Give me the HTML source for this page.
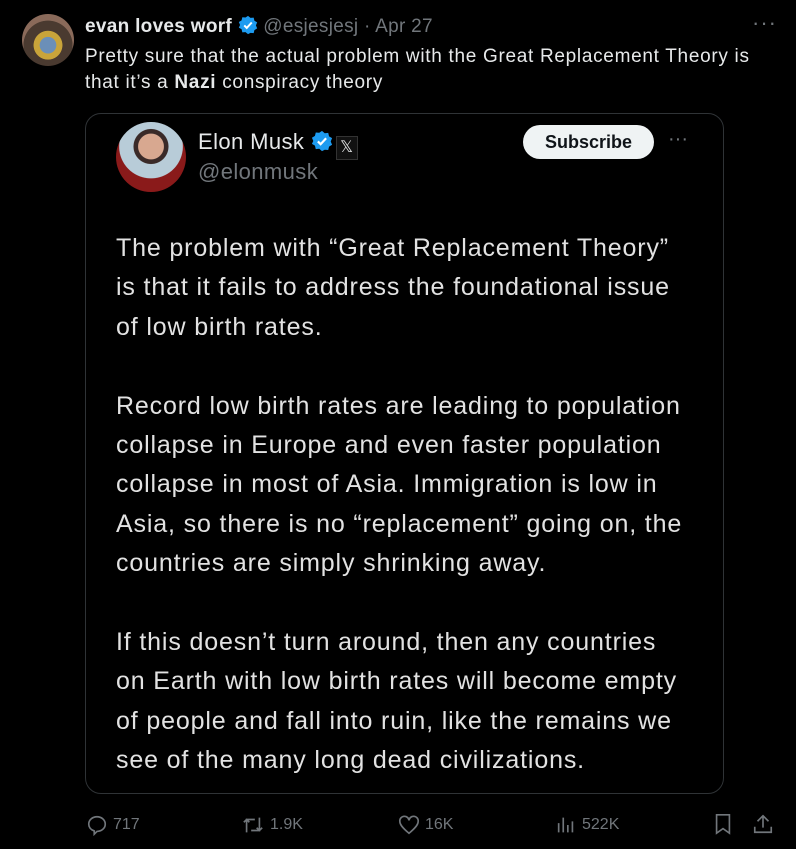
<!DOCTYPE html><html><head><style>
body{margin:0;background:#000;width:796px;height:849px;overflow:hidden;font-family:"Liberation Sans",sans-serif;color:#e7e9ea;position:relative}
.a{position:absolute}
.av{left:22px;top:14px;width:52px;height:52px;border-radius:50%;background:radial-gradient(circle at 50% 60%,#6b8fb8 0 20%,#c9a43a 21% 35%,#4a3a30 36% 60%,#8a6a5a 61%)}
.g{color:#71767b}
.card{left:85px;top:113px;width:637px;height:679px;border:1px solid #2f3336;border-radius:16px}
.body{left:116px;top:229px;font-size:25px;line-height:39.4px;color:#e2e2e2;width:620px;letter-spacing:0.85px;white-space:nowrap}
.ft{top:814px;font-size:16px;color:#71767b;display:flex;align-items:center;gap:5px}
svg{fill:none;stroke:#71767b;stroke-width:1.8}
</style></head><body>
<div class="a av"></div>
<div class="a" style="left:85px;top:14px;font-size:19px;line-height:26px;white-space:nowrap;letter-spacing:0.3px"><b>evan loves worf</b> <svg width="20" height="20" viewBox="0 0 24 24" style="vertical-align:-3px;stroke:none"><path fill="#1d9bf0" d="M12 1l3 2.5 3.8-.3.9 3.7 3.3 2-1.5 3.6 1.5 3.6-3.3 2-.9 3.7-3.8-.3L12 23l-3-2.5-3.8.3-.9-3.7-3.3-2L2.5 12 1 8.4l3.3-2 .9-3.7 3.8.3z"/><path d="M7.5 12.5l3 3 6-6.5" stroke="#fff" stroke-width="2.4" fill="none"/></svg> <span class="g">@esjesjesj · Apr 27</span></div>
<div class="a g" style="left:752px;top:10px;font-size:22px;letter-spacing:1px">···</div>
<div class="a" style="left:85px;top:44px;font-size:19px;line-height:26px;letter-spacing:0.7px;white-space:nowrap">Pretty sure that the actual problem with the Great Replacement Theory is<br>that it’s a <b>Nazi</b> conspiracy theory</div>
<div class="a card"></div>
<div class="a" style="left:116px;top:122px;width:70px;height:70px;border-radius:50%;background:radial-gradient(circle at 50% 35%,#d8a890 0 22%,#3a2a28 23% 30%,#b8ccd8 31% 55%,#8a1a1a 56%)"></div>
<div class="a" style="left:198px;top:129px;font-size:22px;white-space:nowrap;letter-spacing:0.4px">Elon Musk <svg width="22" height="22" viewBox="0 0 24 24" style="vertical-align:-3px;stroke:none"><path fill="#1d9bf0" d="M12 1l3 2.5 3.8-.3.9 3.7 3.3 2-1.5 3.6 1.5 3.6-3.3 2-.9 3.7-3.8-.3L12 23l-3-2.5-3.8.3-.9-3.7-3.3-2L2.5 12 1 8.4l3.3-2 .9-3.7 3.8.3z"/><path d="M7.5 12.5l3 3 6-6.5" stroke="#fff" stroke-width="2.4" fill="none"/></svg><span style="display:inline-block;width:20px;height:22px;border:1px solid #333;background:#111;font-size:16px;text-align:center;line-height:22px;vertical-align:-3px;margin-left:3px">𝕏</span></div>
<div class="a g" style="left:198px;top:159px;font-size:22px;letter-spacing:0.4px">@elonmusk</div>
<div class="a" style="left:523px;top:125px;width:131px;height:34px;border-radius:17px;background:#eff3f4;color:#0f1419;font-weight:bold;font-size:18px;line-height:34px;text-align:center">Subscribe</div>
<div class="a g" style="left:668px;top:128px;font-size:20px">···</div>
<div class="a body">The problem with “Great Replacement Theory”<br>is that it fails to address the foundational issue<br>of low birth rates.<br><br>Record low birth rates are leading to population<br>collapse in Europe and even faster population<br>collapse in most of Asia. Immigration is low in<br>Asia, so there is no “replacement” going on, the<br>countries are simply shrinking away.<br><br>If this doesn’t turn around, then any countries<br>on Earth with low birth rates will become empty<br>of people and fall into ruin, like the remains we<br>see of the many long dead civilizations.</div>
<div class="a ft" style="left:86px"><svg width="22" height="22" viewBox="0 0 24 24"><path d="M12 3c5 0 9 3.5 9 8s-4 8-9 8l-3 3v-3.5C5 17 3 14 3 11c0-4.5 4-8 9-8z"/></svg>717</div>
<div class="a ft" style="left:241px"><svg width="24" height="22" viewBox="0 0 24 24"><path d="M5 20V6h9M2 9l3-3 3 3M19 4v14h-9M22 15l-3 3-3-3"/></svg>1.9K</div>
<div class="a ft" style="left:398px"><svg width="22" height="22" viewBox="0 0 24 24"><path d="M12 21C6 16 2 12 2 8a5 5 0 0 1 10-1 5 5 0 0 1 10 1c0 4-4 8-10 13z"/></svg>16K</div>
<div class="a ft" style="left:555px"><svg width="22" height="22" viewBox="0 0 24 24"><path d="M4 20V10M9 20V4M14 20V12M19 20V8"/></svg>522K</div>
<div class="a" style="left:712px;top:812px"><svg width="22" height="24" viewBox="0 0 24 24"><path d="M5 2h14v20l-7-5-7 5z"/></svg></div>
<div class="a" style="left:752px;top:812px"><svg width="22" height="24" viewBox="0 0 24 24"><path d="M12 16V3M6 9l6-6 6 6M3 15v6h18v-6"/></svg></div>
</body></html>
